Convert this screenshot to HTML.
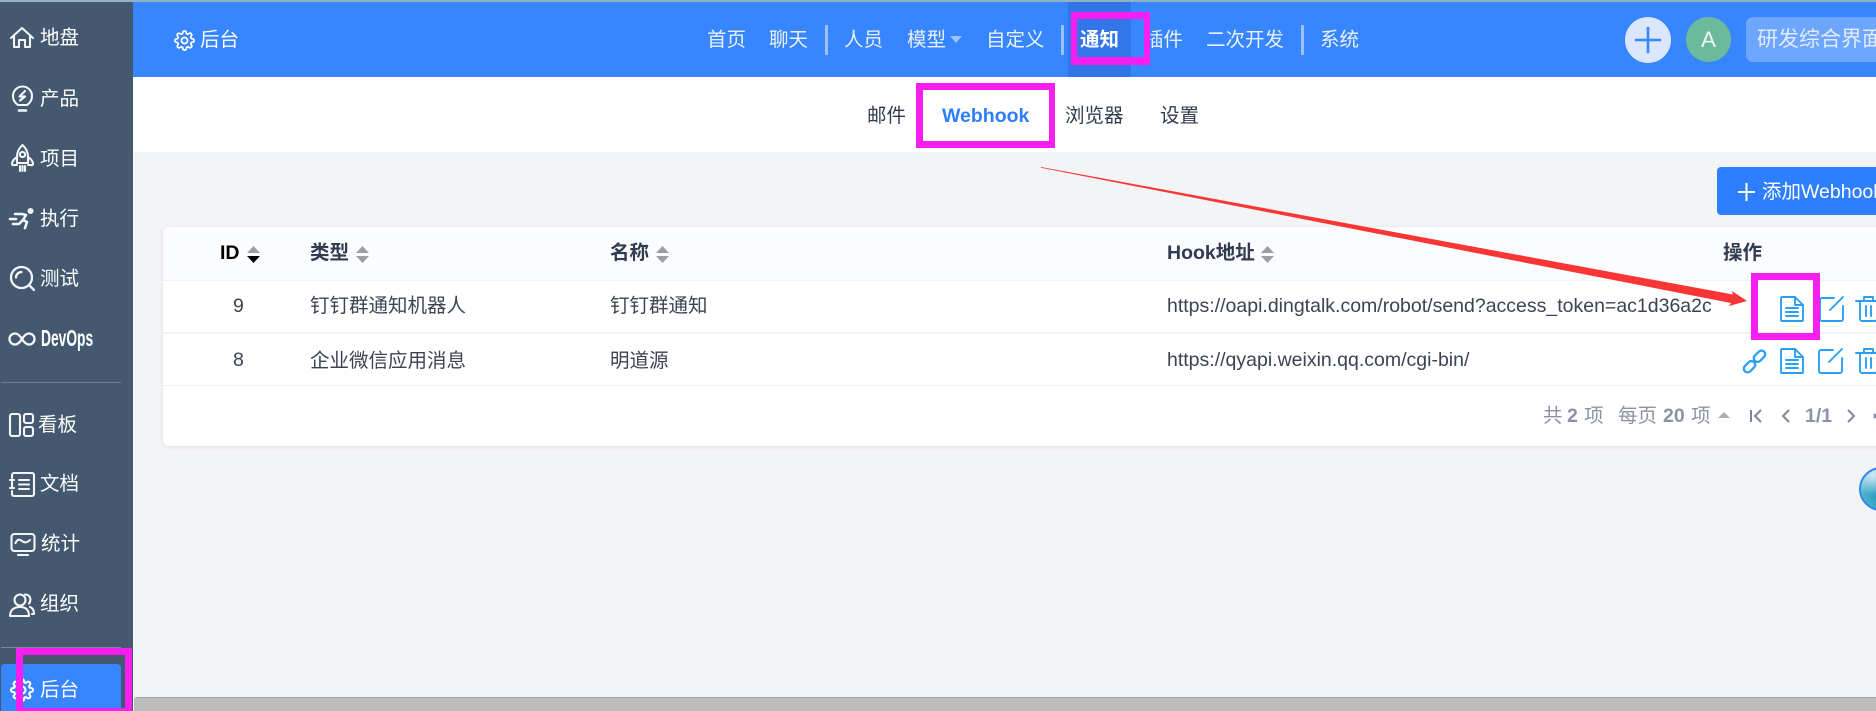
<!DOCTYPE html>
<html lang="zh">
<head>
<meta charset="utf-8">
<title>Webhook</title>
<style>
html,body{margin:0;padding:0;width:1876px;height:711px;overflow:hidden;background:#f3f4f6}
body{position:relative;font-family:"Liberation Sans","Noto Sans CJK SC",sans-serif;font-size:19.5px;color:#3c4353}
.a{position:absolute}
.t{position:absolute;white-space:nowrap;line-height:26px;height:26px}
.w{color:#fff}
.nav{color:#e9f1ff}
.b{font-weight:700}
.sep{position:absolute;top:25px;width:2.5px;height:30px;background:rgba(255,255,255,.5)}
.box{position:absolute;box-sizing:border-box;border-style:solid;border-color:#f61ff0}
svg{position:absolute;overflow:visible}
.si{fill:none;stroke:#f3f5f8;stroke-width:2.1;stroke-linecap:round;stroke-linejoin:round}
.bl{fill:none;stroke:#2a9ff5;stroke-width:1.9;stroke-linejoin:round;stroke-linecap:round}
.hd{color:#313c52;font-weight:700}
.pg{color:#8d93a5}
.line{position:absolute;left:163px;right:0;background:#f1f2f4}
</style>
</head>
<body>
<!-- top strip -->
<div class="a" style="left:0;top:0;width:1876px;height:2px;background:#8fb3c0"></div>

<!-- sidebar -->
<div class="a" style="left:0;top:2px;width:133px;height:709px;background:#44596f"></div>
<div class="a" style="left:1px;top:382px;width:120px;height:1px;background:#6d7f92"></div>
<div class="a" style="left:1px;top:647px;width:120px;height:1px;background:#7c8c9d"></div>
<div class="a" style="left:1px;top:664px;width:120px;height:47px;background:#3785ff;border-radius:4px 4px 0 0"></div>

<svg class="si" style="left:10px;top:27px" width="24" height="22" viewBox="0 0 24 22"><path d="M1 11 12 1l11 10M4 9v11h5v-7h6v7h5V9"/></svg>
<span class="t w" style="left:40px;top:25px">地盘</span>

<svg class="si" style="left:12px;top:85px" width="21" height="27" viewBox="0 0 21 27"><path d="M6 20C3 18 1 15 1 11a9.500 9.500 0 0 1 19 0c0 4-2 7-5 9z"/><path d="M7 25.500h7" stroke-width="2.600"/><path d="M13 6 7.500 11.500H13L8 15.500" stroke-width="2.200"/></svg>
<span class="t w" style="left:40px;top:86px">产品</span>

<svg class="si" style="left:11px;top:144px" width="23" height="28" viewBox="0 0 23 28"><path d="M11.500 1C7 5 6 9 6 13v6h11v-6c0-4-1-8-5.500-12z"/><circle cx="11.500" cy="10.500" r="2.600"/><path d="M6 13c-3 2-5 4-5 7 0 1 1 1.500 2 1h3M17 13c3 2 5 4 5 7 0 1-1 1.500-2 1h-3M9 22v5M11.500 22v5M14 22v5"/></svg>
<span class="t w" style="left:40px;top:146px">项目</span>

<svg style="left:10px;top:208px" width="25" height="21" viewBox="0 0 25 21"><circle cx="20.500" cy="3" r="3" fill="#f3f5f8"/><path d="M5 6h7l4 1-3 5 4 2-2 6M13 12l-4 4H3M0 11h6" fill="none" stroke="#f3f5f8" stroke-width="2.600" stroke-linecap="round" stroke-linejoin="round"/></svg>
<span class="t w" style="left:40px;top:206px">执行</span>

<svg class="si" style="left:10px;top:266px" width="25" height="25" viewBox="0 0 25 25"><circle cx="11.500" cy="11.500" r="10.500" stroke-width="2.300"/><path d="M19 19l5 5M6 11.500C6 8.500 8.500 6 11.500 6" stroke-width="2.300"/></svg>
<span class="t w" style="left:40px;top:266px">测试</span>

<svg class="si" style="left:9px;top:332px" width="26" height="14" viewBox="0 0 26 14"><path stroke-width="2.300" d="M13 7C10.500 3 8.500 1.500 6 1.500a5.500 5.500 0 0 0 0 11c2.500 0 4.500-1.500 7-5.500s4.500-5.500 7-5.500a5.500 5.500 0 0 1 0 11c-2.500 0-4.500-1.500-7-5.500z"/></svg>
<span class="t w b" style="left:41px;top:325px;font-size:23px;transform:scaleX(.6);transform-origin:0 50%">DevOps</span>

<svg class="si" style="left:9px;top:413px" width="25" height="24" viewBox="0 0 25 24"><rect x="1" y="1" width="10" height="22" rx="2"/><rect x="15" y="1" width="9" height="9" rx="2"/><rect x="15" y="14" width="9" height="9" rx="2"/></svg>
<span class="t w" style="left:38px;top:412px">看板</span>

<svg class="si" style="left:9px;top:472px" width="26" height="25" viewBox="0 0 26 25"><path d="M3 6V3a2 2 0 0 1 2-2h18a2 2 0 0 1 2 2v19a2 2 0 0 1-2 2H5a2 2 0 0 1-2-2v-3M3 10v5M1 8h4M1 16h4M10 8h10M10 12.500h10M10 17h10"/></svg>
<span class="t w" style="left:40px;top:471px">文档</span>

<svg class="si" style="left:10px;top:533px" width="26" height="23" viewBox="0 0 26 23"><rect x="1.500" y="1" width="23" height="17" rx="3"/><path d="M5.500 10c2-4 4-4 6.500-2s4.500 2 8-1M8 22h10"/></svg>
<span class="t w" style="left:41px;top:531px">统计</span>

<svg class="si" style="left:9px;top:593px" width="26" height="24" viewBox="0 0 26 24"><circle cx="11" cy="7" r="5.500"/><path d="M1 23c0-6 4-9 10-9s9 3 9 9zM16 1.500c5 0 7 5 4 9M21 14c3 1 4 4 4 7h-2"/></svg>
<span class="t w" style="left:40px;top:591px">组织</span>

<svg style="left:10px;top:678px" width="24" height="24" viewBox="0 0 24 24" fill="none" stroke="#fff" stroke-width="2.100" stroke-linejoin="round"><circle cx="12" cy="12" r="3.500"/><path d="M19.400 15a1.650 1.650 0 0 0 .33 1.820l.06.06a2 2 0 0 1 0 2.830 2 2 0 0 1-2.830 0l-.06-.06a1.650 1.650 0 0 0-1.820-.33 1.650 1.650 0 0 0-1 1.510V21a2 2 0 0 1-2 2 2 2 0 0 1-2-2v-.09A1.650 1.650 0 0 0 9 19.400a1.650 1.650 0 0 0-1.820.33l-.06.06a2 2 0 0 1-2.830 0 2 2 0 0 1 0-2.830l.06-.06a1.650 1.650 0 0 0 .33-1.820 1.650 1.650 0 0 0-1.510-1H3a2 2 0 0 1-2-2 2 2 0 0 1 2-2h.09A1.650 1.650 0 0 0 4.600 9a1.650 1.650 0 0 0-.33-1.820l-.06-.06a2 2 0 0 1 0-2.830 2 2 0 0 1 2.830 0l.06.06a1.650 1.650 0 0 0 1.820.33H9a1.650 1.650 0 0 0 1-1.510V3a2 2 0 0 1 2-2 2 2 0 0 1 2 2v.09a1.650 1.650 0 0 0 1 1.510 1.650 1.650 0 0 0 1.820-.33l.06-.06a2 2 0 0 1 2.830 0 2 2 0 0 1 0 2.830l-.06.06a1.650 1.650 0 0 0-.33 1.820V9a1.650 1.650 0 0 0 1.510 1H21a2 2 0 0 1 2 2 2 2 0 0 1-2 2h-.09a1.650 1.650 0 0 0-1.510 1z"/></svg>
<span class="t w" style="left:40px;top:677px">后台</span>

<!-- top bar -->
<div class="a" style="left:133px;top:2px;width:1743px;height:75px;background:#3785ff"></div>
<div class="a" style="left:1068px;top:2px;width:63px;height:75px;background:#3275e8"></div>

<svg style="left:174px;top:30px" width="21" height="21" viewBox="0 0 24 24" fill="none" stroke="#fff" stroke-width="2" stroke-linejoin="round"><circle cx="12" cy="12" r="3.500"/><path d="M19.400 15a1.650 1.650 0 0 0 .33 1.820l.06.06a2 2 0 0 1 0 2.830 2 2 0 0 1-2.830 0l-.06-.06a1.650 1.650 0 0 0-1.820-.33 1.650 1.650 0 0 0-1 1.510V21a2 2 0 0 1-2 2 2 2 0 0 1-2-2v-.09A1.650 1.650 0 0 0 9 19.400a1.650 1.650 0 0 0-1.820.33l-.06.06a2 2 0 0 1-2.830 0 2 2 0 0 1 0-2.830l.06-.06a1.650 1.650 0 0 0 .33-1.820 1.650 1.650 0 0 0-1.510-1H3a2 2 0 0 1-2-2 2 2 0 0 1 2-2h.09A1.650 1.650 0 0 0 4.600 9a1.650 1.650 0 0 0-.33-1.820l-.06-.06a2 2 0 0 1 0-2.830 2 2 0 0 1 2.830 0l.06.06a1.650 1.650 0 0 0 1.820.33H9a1.650 1.650 0 0 0 1-1.510V3a2 2 0 0 1 2-2 2 2 0 0 1 2 2v.09a1.650 1.650 0 0 0 1 1.510 1.650 1.650 0 0 0 1.820-.33l.06-.06a2 2 0 0 1 2.830 0 2 2 0 0 1 0 2.830l-.06.06a1.650 1.650 0 0 0-.33 1.820V9a1.650 1.650 0 0 0 1.510 1H21a2 2 0 0 1 2 2 2 2 0 0 1-2 2h-.09a1.650 1.650 0 0 0-1.510 1z"/></svg>
<span class="t w" style="left:200px;top:27px">后台</span>

<span class="t nav" style="left:707px;top:27px">首页</span>
<span class="t nav" style="left:769px;top:27px">聊天</span>
<div class="sep" style="left:825px"></div>
<span class="t nav" style="left:844px;top:27px">人员</span>
<span class="t nav" style="left:907px;top:27px">模型</span>
<svg style="left:950px;top:36px" width="12" height="7" viewBox="0 0 12 7"><path d="M0 0h12L6 7z" fill="#9cc2ff"/></svg>
<span class="t nav" style="left:986px;top:27px">自定义</span>
<div class="sep" style="left:1061px"></div>
<span class="t w b" style="left:1080px;top:27px">通知</span>
<span class="t nav" style="left:1144px;top:27px">插件</span>
<span class="t nav" style="left:1206px;top:27px">二次开发</span>
<div class="sep" style="left:1301px"></div>
<span class="t nav" style="left:1320px;top:27px">系统</span>

<!-- right of top bar -->
<div class="a" style="left:1625px;top:17px;width:46px;height:46px;border-radius:50%;background:#dae7ff"></div>
<svg style="left:1635px;top:27px" width="26" height="26" viewBox="0 0 26 26"><path d="M13 1v24M1 13h24" stroke="#3785ff" stroke-width="2.600" stroke-linecap="round"/></svg>
<div class="a" style="left:1686px;top:17px;width:45px;height:45px;border-radius:50%;background:#6cba9c;color:#eef7f3;font-size:22.500px;line-height:45px;text-align:center">A</div>
<div class="a" style="left:1746px;top:17px;width:150px;height:45px;border-radius:7px;background:#6ea6ff"></div>
<span class="t" style="left:1757px;top:27px;color:#e2ecff;font-size:21px">研发综合界面</span>

<!-- sub nav -->
<div class="a" style="left:133px;top:77px;width:1743px;height:75px;background:#fff"></div>
<span class="t" style="left:867px;top:103px;color:#313c52">邮件</span>
<span class="t b" style="left:942px;top:103px;color:#2e7fff">Webhook</span>
<span class="t" style="left:1065px;top:103px;color:#313c52">浏览器</span>
<span class="t" style="left:1160px;top:103px;color:#313c52">设置</span>

<!-- add button -->
<div class="a" style="left:1717px;top:167px;width:180px;height:48px;border-radius:4px;background:#2e7fff"></div>
<svg style="left:1738px;top:183px" width="17" height="18" viewBox="0 0 17 18"><path d="M8.500 0v18M0 9h17" stroke="#fff" stroke-width="2"/></svg>
<span class="t w" style="left:1762px;top:179px">添加Webhook</span>

<!-- table card -->
<div class="a" style="left:163px;top:227px;width:1760px;height:219px;background:#fff;border-radius:6px;box-shadow:0 1px 5px rgba(0,0,0,.09)"></div>
<div class="a" style="left:163px;top:227px;width:1760px;height:53px;background:#fbfcfe;border-radius:6px 6px 0 0"></div>
<div class="line" style="top:280px;height:1px"></div>
<div class="line" style="top:332px;height:2px"></div>
<div class="line" style="top:385px;height:1px"></div>

<span class="t b" style="left:220px;top:240px;color:#000">ID</span>
<svg style="left:247px;top:246px" width="13" height="17" viewBox="0 0 13 17"><path d="M6.500 0 13 7H0z" fill="#9a9ea8"/><path d="M0 10h13l-6.500 7z" fill="#000"/></svg>
<span class="t hd" style="left:310px;top:240px">类型</span>
<svg style="left:356px;top:246px" width="13" height="17" viewBox="0 0 13 17"><path d="M6.500 0 13 7H0zM0 10h13l-6.500 7z" fill="#9a9ea8"/></svg>
<span class="t hd" style="left:610px;top:240px">名称</span>
<svg style="left:656px;top:246px" width="13" height="17" viewBox="0 0 13 17"><path d="M6.500 0 13 7H0zM0 10h13l-6.500 7z" fill="#9a9ea8"/></svg>
<span class="t hd" style="left:1167px;top:240px">Hook地址</span>
<svg style="left:1261px;top:246px" width="13" height="17" viewBox="0 0 13 17"><path d="M6.500 0 13 7H0zM0 10h13l-6.500 7z" fill="#9a9ea8"/></svg>
<span class="t hd" style="left:1723px;top:240px">操作</span>

<span class="t" style="left:233px;top:293px">9</span>
<span class="t" style="left:310px;top:293px">钉钉群通知机器人</span>
<span class="t" style="left:610px;top:293px">钉钉群通知</span>
<span class="t" style="left:1167px;top:293px">https://oapi.dingtalk.com/robot/send?access_token=ac1d36a2c</span>

<span class="t" style="left:233px;top:347px">8</span>
<span class="t" style="left:310px;top:348px">企业微信应用消息</span>
<span class="t" style="left:610px;top:348px">明道源</span>
<span class="t" style="left:1167px;top:347px">https://qyapi.weixin.qq.com/cgi-bin/</span>

<!-- row 1 icons -->
<svg class="bl" style="left:1780px;top:296px" width="24" height="26" viewBox="0 0 24 26"><path d="M1 2a1 1 0 0 1 1-1h13l8 8v15a1 1 0 0 1-1 1H2a1 1 0 0 1-1-1z"/><path d="M15 1v8h8M6 12h12M6 16h12M6 20h12"/></svg>
<svg class="bl" style="left:1819px;top:296px" width="25" height="26" viewBox="0 0 25 26"><path d="M15 2H3a2 2 0 0 0-2 2v19a2 2 0 0 0 2 2h19a2 2 0 0 0 2-2V10M24 1 11 14"/></svg>
<svg class="bl" style="left:1856px;top:296px" width="26" height="26" viewBox="0 0 26 26"><path d="M0 5h25M8 5V1h9v4M4 5v18a2 2 0 0 0 2 2h13a2 2 0 0 0 2-2V5M10 10v10M15 10v10"/></svg>

<!-- row 2 icons -->
<svg class="bl" style="left:1742px;top:349px" width="25" height="25" viewBox="0 0 25 25"><rect x="1" y="14" width="13" height="7.500" rx="3.750" transform="rotate(-45 7.500 17.750)" stroke-width="2.300"/><rect x="11" y="3.500" width="13" height="7.500" rx="3.750" transform="rotate(-45 17.500 7.250)" stroke-width="2.300"/></svg>
<svg class="bl" style="left:1780px;top:348px" width="24" height="26" viewBox="0 0 24 26"><path d="M1 2a1 1 0 0 1 1-1h13l8 8v15a1 1 0 0 1-1 1H2a1 1 0 0 1-1-1z"/><path d="M15 1v8h8M6 12h12M6 16h12M6 20h12"/></svg>
<svg class="bl" style="left:1818px;top:348px" width="25" height="26" viewBox="0 0 25 26"><path d="M15 2H3a2 2 0 0 0-2 2v19a2 2 0 0 0 2 2h19a2 2 0 0 0 2-2V10M24 1 11 14"/></svg>
<svg class="bl" style="left:1856px;top:348px" width="26" height="26" viewBox="0 0 26 26"><path d="M0 5h25M8 5V1h9v4M4 5v18a2 2 0 0 0 2 2h13a2 2 0 0 0 2-2V5M10 10v10M15 10v10"/></svg>

<!-- pagination -->
<span class="t pg" style="left:1543px;top:403px">共</span>
<span class="t pg b" style="left:1567px;top:403px">2</span>
<span class="t pg" style="left:1584px;top:403px">项</span>
<span class="t pg" style="left:1618px;top:403px">每页</span>
<span class="t pg b" style="left:1663px;top:403px">20</span>
<span class="t pg" style="left:1691px;top:403px">项</span>
<svg style="left:1718px;top:412px" width="12" height="6" viewBox="0 0 12 6"><path d="M6 0l6 6H0z" fill="#a9aebb"/></svg>
<svg style="left:1750px;top:409px" width="12" height="14" viewBox="0 0 12 14" fill="none" stroke="#7f879b" stroke-width="2"><path d="M1 1v12M11 1 5 7l6 6"/></svg>
<svg style="left:1782px;top:409px" width="8" height="14" viewBox="0 0 8 14" fill="none" stroke="#7f879b" stroke-width="2"><path d="M7 1 1 7l6 6"/></svg>
<span class="t pg b" style="left:1805px;top:403px">1/1</span>
<svg style="left:1847px;top:409px" width="8" height="14" viewBox="0 0 8 14" fill="none" stroke="#7f879b" stroke-width="2"><path d="M1 1l6 6-6 6"/></svg>
<svg style="left:1873px;top:409px" width="3" height="14" viewBox="0 0 3 14" fill="none" stroke="#7f879b" stroke-width="2"><path d="M1 5l2 2-2 2"/></svg>

<!-- orb -->
<div class="a" style="left:1859px;top:467px;width:44px;height:44px;box-sizing:border-box;border:2px solid #2f86f2;border-radius:50%;background:radial-gradient(circle at 30% 15%,#cfe9f2 0%,rgba(207,233,242,0) 45%),radial-gradient(circle at 55% 65%,#1f94b8 0%,#4ab0cc 55%,#a7d8e7 95%)"></div>

<!-- horizontal scrollbar -->
<div class="a" style="left:134px;top:697px;width:1742px;height:14px;background:#bcbcbc;border-top:1px solid #a4a4a4;box-sizing:border-box;border-radius:3px 0 0 0"></div>

<!-- red arrow -->
<svg style="left:0;top:0" width="1876" height="711" viewBox="0 0 1876 711"><polygon points="1041,167 1733,294.500 1732,291 1747,301 1729,306 1731,303 1041,167.800" fill="#f93535"/></svg>

<!-- magenta annotation boxes -->
<div class="box" style="left:1071px;top:12px;width:79px;height:53px;border-width:7px 6px 8px 6px"></div>
<div class="box" style="left:916px;top:83px;width:139px;height:65px;border-width:7px 6px 7px 7px"></div>
<div class="box" style="left:1751px;top:273px;width:69px;height:67px;border-width:7px"></div>
<div class="box" style="left:16px;top:648px;width:116px;height:63px;border-width:7px 7px 3px 7px"></div>
</body>
</html>
